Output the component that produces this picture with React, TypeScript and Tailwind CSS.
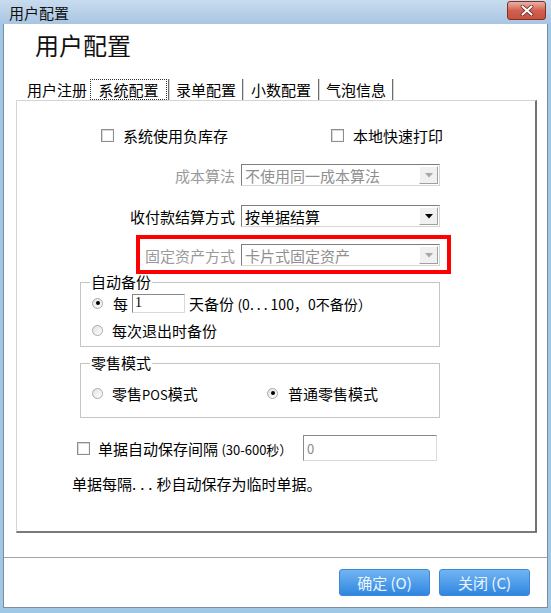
import React from "react";

function Checkbox() {
  return (
    <span className="inline-block w-[13px] h-[13px] shrink-0 border border-[#8e8e8e] bg-white shadow-[inset_1px_1px_0_#d8d8d8,inset_-1px_-1px_0_#f4f4f4]" />
  );
}

function Radio({ checked }: { checked?: boolean }) {
  return (
    <span className="w-[11px] h-[11px] shrink-0 rounded-full border border-[#a8a8a8] bg-gradient-to-br from-[#e2e2e2] to-white flex items-center justify-center">
      {checked && <span className="w-[4px] h-[4px] rounded-full bg-black" />}
    </span>
  );
}

function Select({ text, disabled }: { text: string; disabled?: boolean }) {
  return (
    <div className="w-[199px] h-[22px] flex items-center bg-white border border-[#7d7d7d] border-b-[#d6d6d6] border-r-[#d6d6d6] pl-[3px] pr-[1px]">
      <span className={disabled ? "flex-1 leading-none text-[#8f8f8f]" : "flex-1 leading-none text-black"}>{text}</span>
      <span className="w-[19px] h-[18px] bg-[#f0f0f0] border border-white border-r-[#a0a0a0] border-b-[#a0a0a0] flex items-center justify-center">
        <svg width="8" height="5" viewBox="0 0 8 5">
          <path d="M0 0h8L4 4.5z" fill={disabled ? "#a8a8a8" : "#000"} />
        </svg>
      </span>
    </div>
  );
}

function SelectRow({ label, text, disabled }: { label: string; text: string; disabled?: boolean }) {
  return (
    <div className="flex items-center h-[22px]">
      <span className={disabled ? "w-[218px] text-right text-[#9a9a9a] leading-none" : "w-[218px] text-right text-black leading-none"}>{label}</span>
      <span className="ml-[6px]">
        <Select text={text} disabled={disabled} />
      </span>
    </div>
  );
}

function Tab({ children, w }: { children: React.ReactNode; w: string }) {
  return <div className={`${w} h-[21px] flex items-center justify-center leading-none`}>{children}</div>;
}

function Sep() {
  return <div className="w-[2px] h-[21px] border-l border-[#6c6c6c] border-r border-r-[#d8d8d8]" />;
}

export default function App() {
  return (
    <div className="w-[551px] h-[613px] flex flex-col overflow-hidden bg-[#9fc8e6] font-['Noto_Sans_CJK_SC','Noto_Sans',sans-serif] text-[15px] text-black">
      {/* title bar */}
      <div className="relative h-[24px] shrink-0 flex items-center pl-[9px] bg-gradient-to-b from-[#c9dcef] to-[#a9c5e3]">
        <span className="text-[15px] leading-none text-[#111]">用户配置</span>
        <div className="absolute right-[5px] top-[1px] w-[39px] h-[19px] rounded-[3px] border border-[#7a3128] bg-gradient-to-b from-[#eab0a4] via-[#d2604f] to-[#c9503f] flex items-center justify-center">
          <svg width="14" height="11" viewBox="0 0 14 11">
            <path d="M2.5 1.5L11.5 9.5M11.5 1.5L2.5 9.5" stroke="#5a1e18" strokeWidth="3.6" strokeLinecap="round" />
            <path d="M2.5 1.5L11.5 9.5M11.5 1.5L2.5 9.5" stroke="#ffffff" strokeWidth="2.2" strokeLinecap="round" />
          </svg>
        </div>
      </div>

      {/* client */}
      <div className="flex-1 flex flex-col ml-[3px] mr-[3px] mb-[5px] bg-white border-l border-r border-b border-[#7f8c99]">
        {/* heading */}
        <div className="h-[55px] shrink-0 pl-[31px] pt-[6px]">
          <span className="text-[24px] leading-[30px] text-[#111]">用户配置</span>
        </div>

        {/* tabs */}
        <div className="h-[21px] shrink-0 flex ml-[16px]">
          <div className="w-[70px] h-[21px] flex items-center pl-[7px] leading-none">用户注册</div>
          <div className="w-[77px] h-[21px] border border-dotted border-[#333] flex items-center justify-center leading-none">系统配置</div>
          <div className="w-[1px]" />
          <Sep />
          <Tab w="w-[72px]">录单配置</Tab>
          <Sep />
          <Tab w="w-[74px]">小数配置</Tab>
          <Sep />
          <Tab w="w-[72px]">气泡信息</Tab>
          <Sep />
        </div>

        {/* panel */}
        <div className="h-[433px] w-[521px] shrink-0 ml-[12px] flex flex-col border-t border-l border-[#d4d4d4] border-r-2 border-b-2 border-r-[#727272] border-b-[#7a7a7a]">
          {/* checkboxes */}
          <div className="mt-[24px] h-[20px] flex items-center ml-[84px]">
            <div className="w-[230px] flex items-center">
              <Checkbox />
              <span className="ml-[9px] leading-none">系统使用负库存</span>
            </div>
            <div className="flex items-center">
              <Checkbox />
              <span className="ml-[9px] leading-none">本地快速打印</span>
            </div>
          </div>

          <div className="mt-[19px]">
            <SelectRow label="成本算法" text="不使用同一成本算法" disabled />
          </div>
          <div className="mt-[19px]">
            <SelectRow label="收付款结算方式" text="按单据结算" />
          </div>
          <div className="mt-[17px] relative">
            <SelectRow label="固定资产方式" text="卡片式固定资产" disabled />
            <div className="absolute left-[119px] top-[-9px] w-[315px] h-[39px] border-[4px] border-[#ff0000]" />
          </div>

          {/* group 1 */}
          <div className="relative mt-[16px] ml-[63px] w-[360px] h-[65px] border border-[#c4c4c4] pl-[11px] pt-[10px]">
            <span className="absolute left-[9px] top-[-9px] bg-white px-[1px] leading-none">自动备份</span>
            <div className="h-[20px] flex items-center">
              <Radio checked />
              <span className="ml-[10px] leading-none">每</span>
              <span className="ml-[4px] w-[53px] h-[19px] flex items-center pl-[2px] bg-white border border-[#8a8a8a] border-b-[#dadada] border-r-[#dadada] text-[14px] font-['Liberation_Serif',serif] leading-none">1</span>
              <span className="ml-[4px] leading-none">
                天备份 <span className="text-[14px]">(0<span className="tracking-[3px]">...</span>100，0不备份）</span>
              </span>
            </div>
            <div className="mt-[7px] h-[20px] flex items-center">
              <Radio />
              <span className="ml-[9px] leading-none">每次退出时备份</span>
            </div>
          </div>

          {/* group 2 */}
          <div className="relative mt-[16px] ml-[63px] w-[360px] h-[55px] border border-[#c4c4c4] pl-[11px] pt-[19px]">
            <span className="absolute left-[9px] top-[-9px] bg-white px-[1px] leading-none">零售模式</span>
            <div className="h-[20px] flex items-center">
              <div className="w-[175px] flex items-center">
                <Radio />
                <span className="ml-[9px] leading-none">零售<span className="text-[13px]">POS</span>模式</span>
              </div>
              <Radio checked />
              <span className="ml-[10px] leading-none">普通零售模式</span>
            </div>
          </div>

          {/* autosave */}
          <div className="mt-[17px] h-[26px] flex items-center ml-[60px]">
            <div className="w-[226px] flex items-center">
              <Checkbox />
              <span className="ml-[8px] leading-none">单据自动保存间隔 <span className="text-[13px]">(30-600秒）</span></span>
            </div>
            <span className="w-[134px] h-[26px] flex items-center pl-[3px] bg-white border border-[#8a8a8a] border-b-[#dadada] border-r-[#dadada] text-[13px] text-[#8a8a8a] leading-none">0</span>
          </div>
          <div className="mt-[12px] h-[20px] flex items-center ml-[55px] leading-none">
            单据每隔<span className="tracking-[4px]">...</span>秒自动保存为临时单据。
          </div>
        </div>

        {/* footer */}
        <div className="mt-[24px] flex-1 border-t border-[#a4a4a4] flex justify-end items-start pt-[11px] pr-[17px] gap-[9px]">
          <button className="w-[91px] h-[27px] rounded-[3px] border border-[#3f86d6] bg-gradient-to-b from-[#6fb5f3] to-[#2f86e0] text-[#eef5ff] text-[15px] leading-none flex items-center justify-center">
            确定 (O)
          </button>
          <button className="w-[91px] h-[27px] rounded-[3px] border border-[#3f86d6] bg-gradient-to-b from-[#6fb5f3] to-[#2f86e0] text-[#eef5ff] text-[15px] leading-none flex items-center justify-center">
            关闭 (C)
          </button>
        </div>
      </div>
    </div>
  );
}
